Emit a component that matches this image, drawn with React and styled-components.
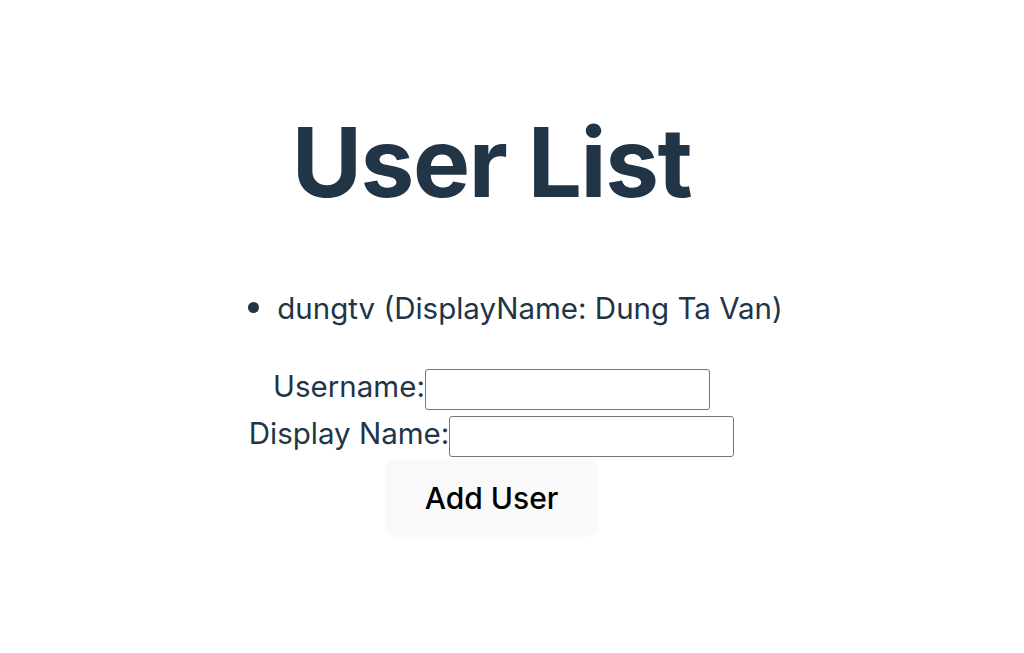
import React, { useState } from "react";
import styled, { createGlobalStyle } from "styled-components";

const GlobalStyle = createGlobalStyle`
  html, body {
    margin: 0;
    padding: 0;
    background: #ffffff;
  }
  body {
    font-family: Inter, "Noto Sans", sans-serif;
    color: #213547;
    -webkit-font-smoothing: antialiased;
  }
`;

function App() {
  const [users, setUsers] = useState([
    { username: "dungtv", displayName: "Dung Ta Van" },
  ]);
  const [inputs, setInputs] = useState({ username: "", displayName: "" });

  const onChange = (e) => {
    const { name, value } = e.target;
    setInputs({ ...inputs, [name]: value });
  };

  const addUser = () => {
    if (!inputs.username) return;
    setUsers([...users, inputs]);
    setInputs({ username: "", displayName: "" });
  };

  return (
    <Page>
      <GlobalStyle />
      <Title>User List</Title>
      <List>
        {users.map((u) => (
          <Item key={u.username}>
            {u.username} (DisplayName: {u.displayName})
          </Item>
        ))}
      </List>
      <Form>
        <Row>
          <Label>Username:</Label>
          <Input name="username" value={inputs.username} onChange={onChange} />
        </Row>
        <Row>
          <Label>Display Name:</Label>
          <Input
            name="displayName"
            value={inputs.displayName}
            onChange={onChange}
          />
        </Row>
        <AddButton onClick={addUser}>Add User</AddButton>
      </Form>
    </Page>
  );
}

export default App;

const Page = styled.div`
  width: 1024px;
  height: 653px;
  box-sizing: border-box;
  padding: 110px 41px 0 0;
  display: flex;
  flex-direction: column;
  align-items: center;
`;

const Title = styled.h1`
  margin: 0;
  font-size: 96px;
  font-weight: 700;
  line-height: 1.1;
  letter-spacing: -1.4px;
  color: #213547;
`;

const List = styled.ul`
  margin: 71px 0 0 0;
  padding: 0 0 0 77px;
  list-style: disc;
`;

const Item = styled.li`
  font-size: 29.5px;
  line-height: 39px;

  &::marker {
    font-size: 34px;
  }
`;

const Form = styled.div`
  margin-top: 38px;
  display: flex;
  flex-direction: column;
  align-items: center;
`;

const Row = styled.div`
  height: 47px;
  display: flex;
  align-items: center;
`;

const Label = styled.label`
  font-size: 29.5px;
  line-height: 39px;
  margin-bottom: 5px;
`;

const Input = styled.input`
  width: 285px;
  height: 41px;
  box-sizing: border-box;
  margin: 0;
  padding: 0 8px;
  border: 1px solid #767676;
  border-radius: 3px;
  font-size: 20px;
  font-family: inherit;
  background: #ffffff;
  outline: none;
`;

const AddButton = styled.button`
  height: 78px;
  margin-top: -1px;
  padding: 0 39px;
  border: 1px solid transparent;
  border-radius: 12px;
  background: #f9f9f9;
  color: #000000;
  font-family: Inter, "Noto Sans", sans-serif;
  font-size: 30px;
  font-weight: 500;
  cursor: pointer;
`;
